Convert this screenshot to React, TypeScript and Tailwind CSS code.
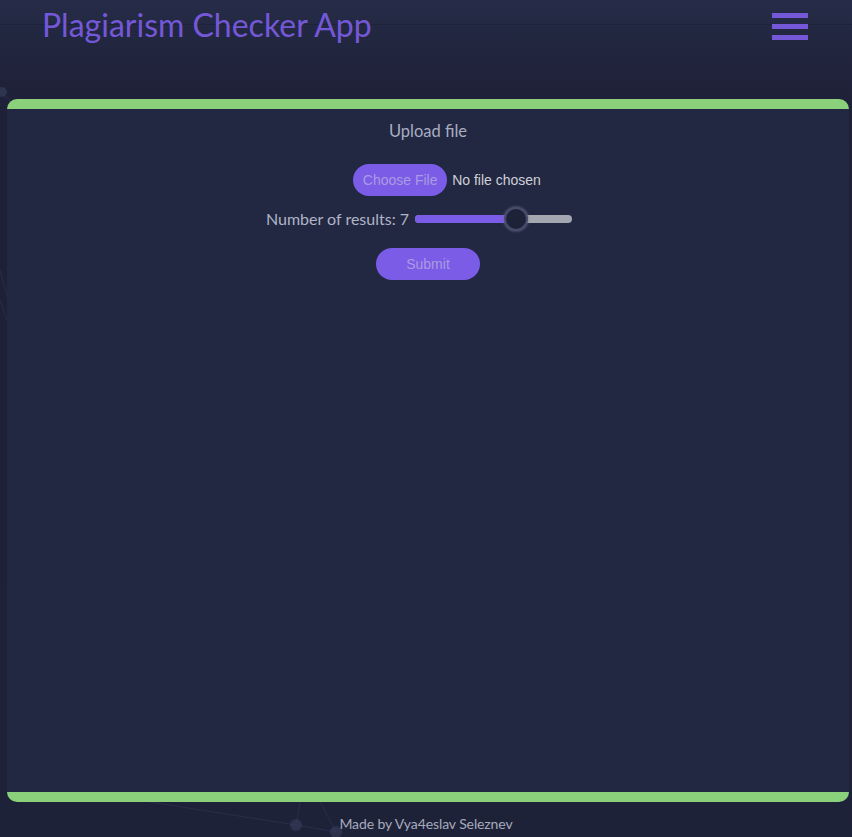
import { FC } from "react";

// Decorative network lines painted on the page background
const BackgroundNet: FC = () => (
	<svg
		className="pointer-events-none absolute inset-0 h-full w-full"
		viewBox="0 0 852 837"
		preserveAspectRatio="none"
	>
		<g stroke="#3a4060" strokeWidth="1" opacity="0.4">
			<line x1="0" y1="92" x2="14" y2="104" />
			<line x1="0" y1="270" x2="8" y2="300" />
			<line x1="0" y1="300" x2="7" y2="320" />
			<line x1="150" y1="802" x2="296" y2="825" />
			<line x1="296" y1="825" x2="336" y2="832" />
			<line x1="296" y1="825" x2="300" y2="802" />
			<line x1="336" y1="832" x2="320" y2="802" />
		</g>
		<g fill="#3d4362" opacity="0.5">
			<circle cx="2" cy="92" r="5" />
			<circle cx="296" cy="825" r="6" />
			<circle cx="336" cy="832" r="6" />
		</g>
	</svg>
);

const Header: FC = () => (
	<header className="relative flex h-[50px] items-center justify-between pl-[42px] pr-[44px]">
		<div className="absolute left-0 right-0 top-[24px] h-px bg-[#1b1f33]/70" />
		<h1 className="relative font-['Lato',sans-serif] text-[32px] font-normal leading-none text-[#7458d8]">
			Plagiarism Checker App
		</h1>
		<button className="relative flex w-[36px] flex-col gap-[6px] pt-[2px]" aria-label="menu">
			<span className="block h-[5px] w-full bg-[#7458d8]" />
			<span className="block h-[5px] w-full bg-[#7458d8]" />
			<span className="block h-[5px] w-full bg-[#7458d8]" />
		</button>
	</header>
);

const ResultsSlider: FC<{ value: number; max: number }> = ({ value, max }) => {
	const pct = (value / max) * 100;
	return (
		<div className="relative h-[8px] w-[157px] rounded-full bg-[#a5a7b0]">
			<div className="h-full rounded-l-full bg-[#7b5ce6]" style={{ width: `${pct}%` }} />
			<div
				className="absolute top-1/2 h-[24px] w-[24px] -translate-x-1/2 -translate-y-1/2 rounded-full border-2 border-[#454b69] bg-[#1e2239] shadow-[0_0_3px_#6b7090]"
				style={{ left: `${pct}%` }}
			/>
		</div>
	);
};

const UploadForm: FC = () => (
	<div className="flex flex-col items-center pt-[10px]">
		<p className="font-['Lato',sans-serif] text-[16.5px] leading-6 text-[#a9adc1]">Upload file</p>

		<div className="ml-[38px] mt-[21px] flex items-center gap-[5px] font-['Liberation_Sans',sans-serif] text-[14px]">
			<span className="flex h-[32px] w-[94px] items-center justify-center rounded-full bg-[#7b5ce6] text-[#a99be4]">
				Choose File
			</span>
			<span className="text-[#cfd0d8]">No file chosen</span>
		</div>

		<div className="mr-[18px] mt-[11px] flex items-center gap-[6px]">
			<span className="font-['Lato',sans-serif] text-[16px] leading-6 text-[#b0b4c6]">
				Number of results: 7
			</span>
			<ResultsSlider value={64} max={100} />
		</div>

		<button className="mt-[17px] flex h-[32px] w-[104px] items-center justify-center rounded-full bg-[#7b5ce6] font-['Liberation_Sans',sans-serif] text-[14px] text-[#a99be4]">
			Submit
		</button>
	</div>
);

export default function App() {
	return (
		<div className="relative min-h-[837px] overflow-hidden bg-[linear-gradient(180deg,#262c48_0px,#20243c_60px,#1d2037_120px,#1e2238_837px)]">
			<BackgroundNet />
			<div className="relative">
				<Header />
				<main className="ml-[7px] mr-[3px] mt-[49px] h-[703px] rounded-[10px] border-y-[10px] border-[#8bd17b] bg-[#222842]">
					<UploadForm />
				</main>
				<footer className="flex h-[35px] items-center justify-center pt-[8px] font-['Lato',sans-serif] text-[14px] tracking-[-0.1px] text-[#a6aabd]">
					Made by Vya4eslav Seleznev
				</footer>
			</div>
		</div>
	);
}
